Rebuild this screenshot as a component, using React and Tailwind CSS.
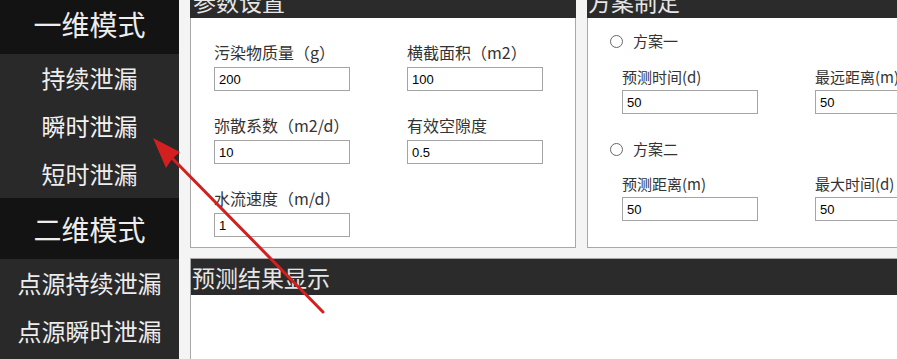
import { useState } from 'react';

const Campo = ({ etiqueta, valor, claseEtiqueta, claseInput }) => (
    <div>
        <div className={claseEtiqueta}>{etiqueta}</div>
        <input
            readOnly
            value={valor}
            className={`block w-[136px] h-[24px] border border-[#a4a4a4] bg-white pl-[4px] text-[13px] text-black outline-none font-['Liberation_Sans',sans-serif] ${claseInput}`}
        />
    </div>
);

const Radio = ({ texto }) => (
    <div className="flex items-center leading-[20px] text-[15px] text-[#333]">
        <span className="w-[13px] h-[13px] rounded-full border border-[#666] bg-white"></span>
        <span className="ml-[10px]">{texto}</span>
    </div>
);

const App = () => {
    const [activo] = useState('瞬时泄漏');
    const items1 = ['持续泄漏', '瞬时泄漏', '短时泄漏'];
    const items2 = ['点源持续泄漏', '点源瞬时泄漏'];

    const etiqueta1 = 'leading-[20px] text-[16px] text-[#333]';
    const etiqueta2 = 'leading-[20px] text-[15px] text-[#333]';

    return (
        <div className="relative w-[897px] h-[359px] overflow-hidden flex bg-[#f4f4f4] font-['Noto_Sans_CJK_SC',sans-serif]">
            {/* Menu lateral */}
            <aside className="w-[179px] shrink-0 bg-[#292929] text-[#ededed]">
                <div className="h-[54px] bg-[#131313] flex items-center justify-center pb-[6px] text-[28px]">一维模式</div>
                {items1.map(it => (
                    <div key={it} className={`h-[48px] flex items-center justify-center text-[24px] ${activo === it ? 'text-[#f2f2f2]' : ''}`}>{it}</div>
                ))}
                <div className="h-[61px] bg-[#131313] flex items-center justify-center text-[28px]">二维模式</div>
                {items2.map(it => (
                    <div key={it} className="h-[48px] flex items-center justify-center text-[24px]">{it}</div>
                ))}
            </aside>

            <main className="flex-1 min-w-0 pl-[11px] flex flex-col">
                <div className="flex gap-[11px] h-[248px] shrink-0">
                    {/* Parámetros */}
                    <section className="w-[386px] shrink-0 bg-white border border-t-0 border-[#a8a8a8] flex flex-col">
                        <div className="h-[18px] bg-[#2b2b2b] overflow-hidden -mx-[1px] px-[3px]">
                            <div className="-mt-[10px] leading-[23px] text-[23px] text-[#e6e6e6]">参数设置</div>
                        </div>
                        <div className="pl-[23px] pt-[24px] grid grid-cols-[193px_1fr] gap-y-[24px]">
                            <Campo etiqueta="污染物质量（g）" valor="200" claseEtiqueta={etiqueta1} claseInput="mt-[5px]" />
                            <Campo etiqueta="横截面积（m2）" valor="100" claseEtiqueta={etiqueta1} claseInput="mt-[5px]" />
                            <Campo etiqueta="弥散系数（m2/d）" valor="10" claseEtiqueta={etiqueta1} claseInput="mt-[5px]" />
                            <Campo etiqueta="有效空隙度" valor="0.5" claseEtiqueta={etiqueta1} claseInput="mt-[5px]" />
                            <Campo etiqueta="水流速度（m/d）" valor="1" claseEtiqueta={etiqueta1} claseInput="mt-[5px]" />
                        </div>
                    </section>

                    {/* Plan */}
                    <section className="w-[420px] shrink-0 bg-white border border-t-0 border-[#a8a8a8] flex flex-col">
                        <div className="h-[18px] bg-[#2b2b2b] overflow-hidden -mx-[1px] px-[1px]">
                            <div className="-mt-[10px] leading-[23px] text-[23px] text-[#e6e6e6]">方案制定</div>
                        </div>
                        <div className="pl-[22px] pt-[13px]">
                            <Radio texto="方案一" />
                            <div className="pl-[12px] mt-[16px] grid grid-cols-[193px_1fr]">
                                <Campo etiqueta="预测时间(d)" valor="50" claseEtiqueta={etiqueta2} claseInput="mt-[3px]" />
                                <Campo etiqueta="最远距离(m)" valor="50" claseEtiqueta={etiqueta2} claseInput="mt-[3px]" />
                            </div>
                            <div className="mt-[25px]">
                                <Radio texto="方案二" />
                            </div>
                            <div className="pl-[12px] mt-[15px] grid grid-cols-[193px_1fr]">
                                <Campo etiqueta="预测距离(m)" valor="50" claseEtiqueta={etiqueta2} claseInput="mt-[3px]" />
                                <Campo etiqueta="最大时间(d)" valor="50" claseEtiqueta={etiqueta2} claseInput="mt-[3px]" />
                            </div>
                        </div>
                    </section>
                </div>

                {/* Resultados */}
                <section className="mt-[10px] flex-1 bg-white border-l border-t border-[#a8a8a8]">
                    <div className="h-[36px] bg-[#2b2b2b] flex items-center text-[23px] text-[#e6e6e6] pl-[1px]">预测结果显示</div>
                </section>
            </main>

            {/* Flecha roja */}
            <svg className="absolute inset-0 pointer-events-none" width="897" height="359" viewBox="0 0 897 359">
                <line x1="323" y1="312" x2="170" y2="156" stroke="#d21f1f" strokeWidth="3" strokeLinecap="round" />
                <polygon points="153,138 180,152 172,159 166,168" fill="#d21f1f" />
            </svg>
        </div>
    );
};

export default App;
